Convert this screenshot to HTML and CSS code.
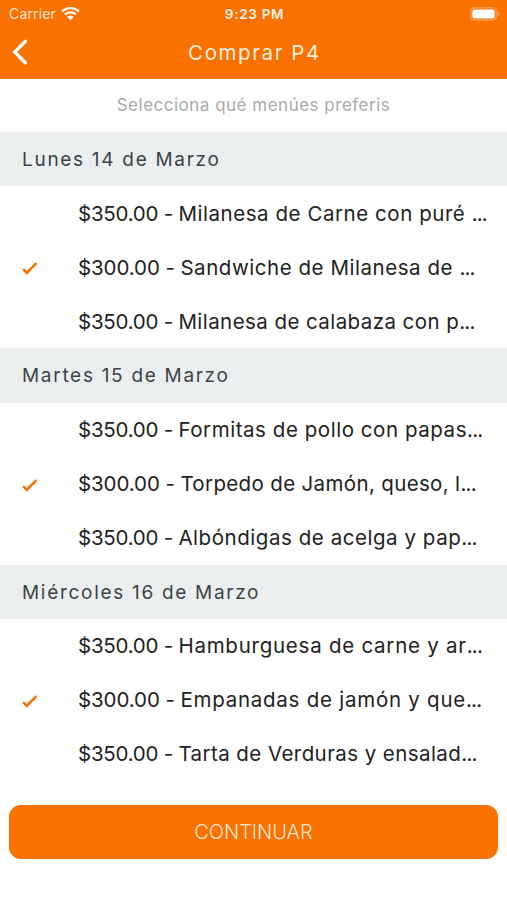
FILE: index.html
```
<!DOCTYPE html>
<html lang="es">
<head>
    <meta charset="UTF-8">
    <meta name="viewport" content="width=device-width, initial-scale=1.0">
    <title>Comprar P4</title>
    <link rel="stylesheet" href="styles.css">
</head>
<body>
    <header class="top">
        <div class="status-bar">
            <div class="carrier">
                <span>Carrier</span>
                <svg class="wifi" viewBox="0 0 18 14" width="19" height="15">
                    <path d="M1 5.1a11.6 11.6 0 0 1 16 0M3.8 8a7.6 7.6 0 0 1 10.4 0" fill="none" stroke="#fff" stroke-width="2.1"/>
                    <path d="M6 10.2a4.5 4.5 0 0 1 6 0L9 13.4z" fill="#fff"/>
                </svg>
            </div>
            <span class="time">9:23 PM</span>
            <svg class="battery" viewBox="0 0 30 14" width="30" height="14">
                <rect x="0.8" y="0.8" width="25.4" height="12.4" rx="3.6" fill="none" stroke="#ffa866" stroke-width="1.2"/>
                <rect x="2.4" y="2.4" width="22.2" height="9.2" rx="2" fill="#fff"/>
                <path d="M27.8 4.8v4.4q1.7-.8 1.7-2.2t-1.7-2.2z" fill="#ffa866"/>
            </svg>
        </div>
        <div class="nav-bar">
            <a class="back" href="#" aria-label="Volver">
                <svg viewBox="0 0 16 26" width="16" height="26">
                    <path d="M13.4 2.4 2.8 13l10.6 10.8" fill="none" stroke="#fff" stroke-width="3.4" stroke-linecap="round"/>
                </svg>
            </a>
            <h1>Comprar P4</h1>
        </div>
    </header>

    <p class="hint">Selecciona qué menúes preferis</p>

    <main>
        <section class="day">
            <h2>Lunes 14 de Marzo</h2>
            <ul>
                <li><p><span class="price">$350.00 - </span>Milanesa de Carne con puré <span class="dots">...</span></p></li>
                <li class="selected"><svg class="check" viewBox="0 0 16 14"><path d="m1.2 8.2 3.6 3.6L14.4 2.2"/></svg><p><span class="price">$300.00 - </span>Sandwiche de Milanesa de <span class="dots">...</span></p></li>
                <li><p class="medium"><span class="price">$350.00 - </span>Milanesa de calabaza con p<span class="dots">...</span></p></li>
            </ul>
        </section>
        <section class="day">
            <h2>Martes 15 de Marzo</h2>
            <ul>
                <li><p><span class="price">$350.00 - </span>Formitas de pollo con papas<span class="dots">...</span></p></li>
                <li class="selected"><svg class="check" viewBox="0 0 16 14"><path d="m1.2 8.2 3.6 3.6L14.4 2.2"/></svg><p class="narrow"><span class="price">$300.00 - </span>Torpedo de Jamón, queso, l<span class="dots">...</span></p></li>
                <li><p><span class="price">$350.00 - </span>Albóndigas de acelga y pap<span class="dots">...</span></p></li>
            </ul>
        </section>
        <section class="day">
            <h2>Miércoles 16 de Marzo</h2>
            <ul>
                <li><p class="wide"><span class="price">$350.00 - </span>Hamburguesa de carne y ar<span class="dots">...</span></p></li>
                <li class="selected"><svg class="check" viewBox="0 0 16 14"><path d="m1.2 8.2 3.6 3.6L14.4 2.2"/></svg><p class="wide"><span class="price">$300.00 - </span>Empanadas de jamón y que<span class="dots">...</span></p></li>
                <li><p class="medium"><span class="price">$350.00 - </span>Tarta de Verduras y ensalad<span class="dots">...</span></p></li>
            </ul>
        </section>
    </main>

    <button class="continue">CONTINUAR</button>
</body>
</html>
```
FILE: styles.css
```
* { box-sizing: border-box; margin: 0; padding: 0; }
body { font-family: Inter, "Open Sans", sans-serif; background: #fff; color: #222; height: 900px; overflow: hidden; }
.top { height: 79px; background: #f97100; color: #fff; }
.status-bar {
    display: grid;
    grid-template-columns: 1fr auto 1fr;
    align-items: center;
    height: 27px;
    padding: 0 7px 0 9px;
}
.carrier { display: flex; align-items: center; gap: 5px; font-size: 14px; letter-spacing: 0.15px; color: #ffe3cc; }
.time { font-size: 13.5px; font-weight: 600; letter-spacing: 0.7px; color: #fff3e8; }
.battery { justify-self: end; }
.nav-bar { display: grid; grid-template-columns: 40px 1fr 40px; align-items: center; height: 50px; }
.back { display: flex; padding-left: 12px; }
h1 { padding-left: 2px; font-size: 20.5px; font-weight: 400; letter-spacing: 1.6px; text-align: center; color: #ffeedd; }
.hint { height: 53px; line-height: 52px; font-size: 17px; letter-spacing: 0.5px; text-align: center; color: #aaa; }
.day h2 {
    height: 54.25px;
    padding-left: 22px;
    background: #ebeff0;
    color: #3d4346;
    font-size: 19px;
    font-weight: 400;
    line-height: 55.5px;
    letter-spacing: 1.7px;
}
.day ul { list-style: none; }
.day li {
    display: grid;
    grid-template-columns: 56px 1fr;
    align-items: center;
    height: 54px;
    padding-left: 22px;
    font-size: 20.5px;
    white-space: nowrap;
}
.day li p { grid-column: 2; letter-spacing: 0.55px; }
.day li .narrow { letter-spacing: 0.35px; }
.day li .medium { letter-spacing: 0.43px; }
.day li .wide { letter-spacing: 0.75px; }
.day li .price { letter-spacing: -0.25px; }
.day .selected .price { letter-spacing: -0.1px; }
.day .dots { letter-spacing: -0.8px; }
.check { width: 16px; height: 14px; margin-top: 2px; fill: none; stroke: #f97100; stroke-width: 2.6; }
.continue {
    display: block;
    width: 489px;
    height: 54px;
    margin: 24px 0 0 9px;
    border: none;
    border-radius: 12px;
    background: #f97100;
    color: #ffe6d0;
    font-family: inherit;
    font-size: 20px;
    font-weight: 300;
}
```
